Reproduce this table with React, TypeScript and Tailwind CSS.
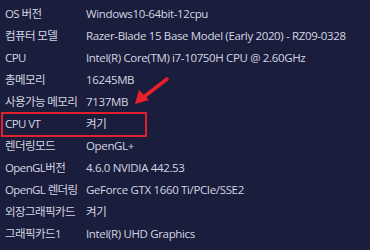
import React from "react";

const rows: [string, string][] = [
  ["OS 버전", "Windows10-64bit-12cpu"],
  ["컴퓨터 모델", "Razer-Blade 15 Base Model (Early 2020) - RZ09-0328"],
  ["CPU", "Intel(R) Core(TM) i7-10750H CPU @ 2.60GHz"],
  ["총메모리", "16245MB"],
  ["사용가능 메모리", "7137MB"],
  ["CPU VT", "켜기"],
  ["렌더링모드", "OpenGL+"],
  ["OpenGL버전", "4.6.0 NVIDIA 442.53"],
  ["OpenGL 렌더링", "GeForce GTX 1660 Ti/PCIe/SSE2"],
  ["외장그래픽카드", "켜기"],
  ["그래픽카드1", "Intel(R) UHD Graphics"],
];

export default function App() {
  return (
    <div
      className="relative w-[370px] h-[250px] overflow-hidden bg-[#1b1d3c] text-[#d3d6e2] text-[11.5px] pt-[3px]"
      style={{ fontFamily: '"Open Sans", "Noto Sans CJK KR", sans-serif' }}
    >
      {rows.map(([label, value]) => (
        <div key={label} className="flex items-center h-[22px]">
          <span className="w-[86px] pl-[5px] shrink-0 whitespace-nowrap tracking-[-0.6px]">{label}</span>
          <span className="whitespace-nowrap tracking-[-0.35px]">{value}</span>
        </div>
      ))}

      {/* highlight box */}
      <div className="absolute left-[1px] top-[112px] w-[146px] h-[25px] border-2 border-[#e0202c]" />

      {/* arrow */}
      <svg className="absolute left-0 top-0" width="370" height="250">
        <line x1="167" y1="79" x2="145" y2="96" stroke="#e8202c" strokeWidth="3.5" strokeLinecap="round" />
        <polygon points="135,104 139,90 149,100" fill="#e8202c" />
      </svg>
    </div>
  );
}
